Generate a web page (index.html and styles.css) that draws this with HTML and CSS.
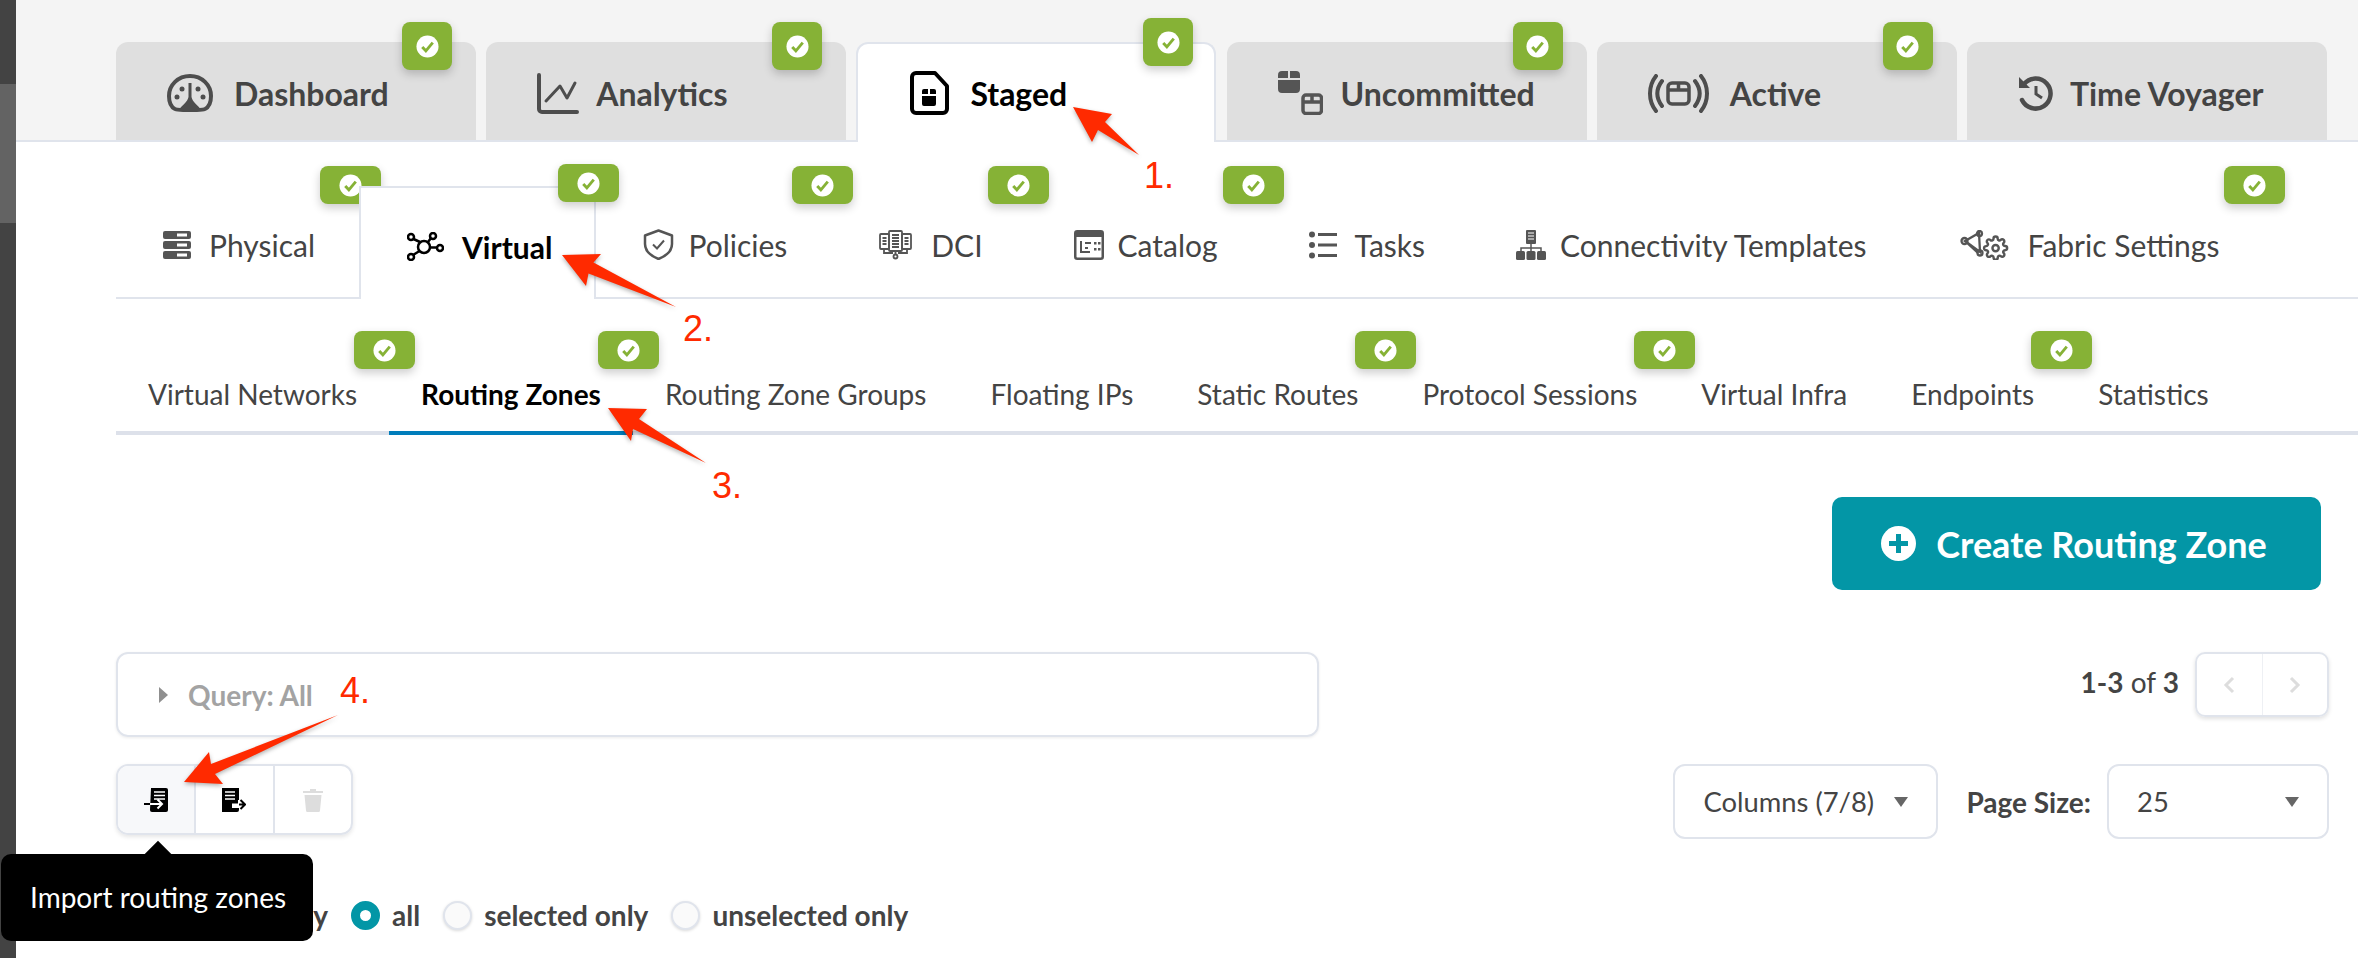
FILE: index.html
```html
<!DOCTYPE html>
<html lang="en">
<head>
    <meta charset="UTF-8">
    <title>Routing Zones</title>
    <link rel="stylesheet" href="styles.css">
</head>
<body>
    <svg class="sprite" aria-hidden="true">
        <symbol id="check" viewBox="0 0 24 24">
            <circle cx="12" cy="12" r="11.5" fill="#fff"/>
            <path d="M6.5 12.5l3.8 4L17.5 8" fill="none" stroke="#86b236" stroke-width="3"/>
        </symbol>
    </svg>

    <div class="side-strip">
        <div class="strip-dark strip-top"></div>
        <div class="strip-light"></div>
        <div class="strip-dark strip-rest"></div>
    </div>

    <div class="page">
        <!-- top level tabs -->
        <div class="main-tabs">
            <div class="main-tab">
                <svg class="ico-dash" viewBox="0 0 46 38"><path d="M23 2C11 2 2 11 2 22c0 6 2 11 6 13 4 1.500 26 1.500 30 0 4-2 6-7 6-13C44 11 35 2 23 2z" fill="none" stroke="#4d4d4d" stroke-width="4"/><path d="M21.500 9h3v14c1 5 6 8 10 13H11.500c4-5 9-8 10-13z" fill="#4d4d4d"/><circle cx="10" cy="23" r="2.500" fill="#4d4d4d"/><circle cx="15" cy="15" r="2.500" fill="#4d4d4d"/><circle cx="31" cy="15" r="2.500" fill="#4d4d4d"/><circle cx="36" cy="23" r="2.500" fill="#4d4d4d"/></svg>
                <span>Dashboard</span>
                <div class="badge"><svg><use href="#check"/></svg></div>
            </div>
            <div class="main-tab">
                <svg class="ico-chart" viewBox="0 0 42 41"><path d="M2 2v34a3 3 0 0 0 3 3h35" fill="none" stroke="#4d4d4d" stroke-width="4" stroke-linecap="round"/><path d="M9 28l14-15 7 12 8-15" fill="none" stroke="#4d4d4d" stroke-width="3" stroke-linecap="round" stroke-linejoin="round"/></svg>
                <span>Analytics</span>
                <div class="badge"><svg><use href="#check"/></svg></div>
            </div>
            <div class="main-tab active">
                <svg class="ico-staged" viewBox="0 0 40 44"><path d="M7 2h19l12 13v23a4 4 0 0 1-4 4H7a4 4 0 0 1-4-4V6a4 4 0 0 1 4-4z" fill="none" stroke="#000" stroke-width="4" stroke-linejoin="round"/><path d="M13 20a2 2 0 0 1 2-2h4v5h-6zM21 18h4a2 2 0 0 1 2 2v3h-6zM13 25h14v8a2 2 0 0 1-2 2H15a2 2 0 0 1-2-2z" fill="#000"/></svg>
                <span>Staged</span>
                <div class="badge"><svg><use href="#check"/></svg></div>
            </div>
            <div class="main-tab">
                <svg class="ico-uncommitted" viewBox="0 0 45 44"><path d="M0 7V4a4 4 0 0 1 4-4h6v7zM12 0h6a4 4 0 0 1 4 4v3H12zM0 9h22v9a4 4 0 0 1-4 4H4a4 4 0 0 1-4-4z" fill="#555"/><rect x="25" y="24" width="18.500" height="18.500" rx="3" fill="none" stroke="#555" stroke-width="3.500"/><path d="M24 31h20M34 23v8" stroke="#555" stroke-width="3.500"/></svg>
                <span>Uncommitted</span>
                <div class="badge"><svg><use href="#check"/></svg></div>
            </div>
            <div class="main-tab">
                <svg class="ico-active" viewBox="0 0 61 39"><g fill="none" stroke="#4d4d4d" stroke-width="4" stroke-linecap="round"><path d="M8 2C0 12 0 27 8 37M14 7C8 15 8 24 14 32M53 2c8 10 8 25 0 35M47 7c6 8 6 17 0 25"/><rect x="20" y="9" width="21" height="21" rx="4" stroke-width="3.500"/><path d="M20 16h21M30.500 9v7" stroke-width="3.500" stroke-linecap="butt"/></g></svg>
                <span>Active</span>
                <div class="badge"><svg><use href="#check"/></svg></div>
            </div>
            <div class="main-tab">
                <svg class="ico-time" viewBox="0 0 35 35"><path d="M6 8A15 15 0 1 1 4 24" fill="none" stroke="#4d4d4d" stroke-width="4.500" stroke-linecap="round"/><path d="M1 1v11h11z" fill="#4d4d4d"/><path d="M18 10v8l6 4" fill="none" stroke="#4d4d4d" stroke-width="3"/></svg>
                <span>Time Voyager</span>
            </div>
        </div>

        <!-- second level -->
        <div class="sub-tabs">
            <div class="sub-tab">
                <svg class="ico-server" viewBox="0 0 28 28"><g fill="#555"><rect width="28" height="8" rx="2"/><rect y="10" width="28" height="8" rx="2"/><rect y="20" width="28" height="8" rx="2"/></g><g fill="#fff"><rect x="14" y="2.500" width="10" height="3"/><rect x="14" y="12.500" width="10" height="3"/><rect x="14" y="22.500" width="10" height="3"/></g></svg>
                <span>Physical</span>
                <div class="badge"><svg><use href="#check"/></svg></div>
            </div>
            <div class="sub-tab active">
                <svg class="ico-virtual" viewBox="0 0 37 29"><g fill="none" stroke="#000" stroke-width="2.500"><circle cx="17" cy="15" r="6"/><circle cx="26" cy="4" r="3"/><circle cx="4" cy="5" r="3"/><circle cx="4" cy="25" r="3"/><circle cx="33" cy="16" r="3"/><path d="M21 10l3-4M13 10L6.500 7M12.500 19L6 23M23 15.500h7"/></g></svg>
                <span>Virtual</span>
                <div class="badge"><svg><use href="#check"/></svg></div>
            </div>
            <div class="sub-tab">
                <svg class="ico-shield" viewBox="0 0 31 31"><path d="M15.500 1.500L29 6.500V15c0 7-6 12-13.500 15C8 27 2 22 2 15V6.500z" fill="none" stroke="#555" stroke-width="2.500" stroke-linejoin="round"/><path d="M10 15.500l4 4 7-8" fill="none" stroke="#555" stroke-width="2"/></svg>
                <span>Policies</span>
                <div class="badge"><svg><use href="#check"/></svg></div>
            </div>
            <div class="sub-tab">
                <svg class="ico-dci" viewBox="0 0 35 30"><g fill="none" stroke="#555" stroke-width="1.800"><rect x="11" y="1" width="13" height="20" rx="1"/><rect x="2" y="4" width="9" height="15" rx="1"/><rect x="24" y="4" width="9" height="15" rx="1"/><path d="M14 5h7M14 8h7M14 11h7M14 14h7M14 17h7M4.500 8h4M4.500 11h4M4.500 14h4M26.500 8h4M26.500 11h4M26.500 14h4M6 19v4h9M29 19v4h-9M17.500 21v4"/><circle cx="17.500" cy="26.500" r="2"/></g></svg>
                <span>DCI</span>
                <div class="badge"><svg><use href="#check"/></svg></div>
            </div>
            <div class="sub-tab">
                <svg class="ico-catalog" viewBox="0 0 30 30"><rect x="1.250" y="1.250" width="27.500" height="27.500" rx="2" fill="none" stroke="#555" stroke-width="2.500"/><rect x="1" y="1" width="28" height="6" fill="#555"/><path d="M7 11v11h9M11 13h6M11 18h3" fill="none" stroke="#555" stroke-width="2"/><g fill="#555"><rect x="20" y="12" width="2.500" height="2.500"/><rect x="24" y="12" width="2.500" height="2.500"/><rect x="20" y="18" width="2.500" height="2.500"/><rect x="24" y="18" width="2.500" height="2.500"/></g></svg>
                <span>Catalog</span>
                <div class="badge"><svg><use href="#check"/></svg></div>
            </div>
            <div class="sub-tab">
                <svg class="ico-tasks" viewBox="0 0 28 28"><g fill="#555"><circle cx="3" cy="3.500" r="3"/><circle cx="3" cy="14" r="3"/><circle cx="3" cy="24.500" r="3"/></g><path d="M9 3.500h19M9 14h19M9 24.500h19" stroke="#555" stroke-width="3"/></svg>
                <span>Tasks</span>
            </div>
            <div class="sub-tab">
                <svg class="ico-conn" viewBox="0 0 30 30"><rect x="10" width="10" height="14" rx="1" fill="#555"/><path d="M12 3h6M12 6h6M12 9h6" stroke="#fff" stroke-width="1.200"/><path d="M15 14v4M5 21v-3h20v3M15 18v3" fill="none" stroke="#555" stroke-width="1.500"/><g fill="#555"><rect y="21" width="9" height="9" rx="1.500"/><rect x="10.500" y="21" width="9" height="9" rx="1.500"/><rect x="21" y="21" width="9" height="9" rx="1.500"/></g></svg>
                <span>Connectivity Templates</span>
            </div>
            <div class="sub-tab fabric">
                <svg class="ico-fabric" viewBox="0 0 50 30"><g fill="none" stroke="#555" stroke-width="2.300"><path d="M5 11L19 3l1 19zM5 11l13 12"/><circle cx="4.500" cy="11" r="3"/><circle cx="19.500" cy="3.500" r="2.500"/><circle cx="20" cy="23" r="2.500"/><g transform="translate(23 5.500) scale(1.050)"><circle cx="12" cy="12" r="3"/><path d="M19.400 15a1.650 1.650 0 0 0 .33 1.820l.06.06a2 2 0 0 1 0 2.830 2 2 0 0 1-2.830 0l-.06-.06a1.650 1.650 0 0 0-1.820-.33 1.650 1.650 0 0 0-1 1.510V21a2 2 0 0 1-2 2 2 2 0 0 1-2-2v-.09A1.650 1.650 0 0 0 9 19.400a1.650 1.650 0 0 0-1.820.33l-.06.06a2 2 0 0 1-2.830 0 2 2 0 0 1 0-2.830l.06-.06a1.650 1.650 0 0 0 .33-1.820 1.650 1.650 0 0 0-1.510-1H3a2 2 0 0 1-2-2 2 2 0 0 1 2-2h.09A1.650 1.650 0 0 0 4.600 9a1.650 1.650 0 0 0-.33-1.820l-.06-.06a2 2 0 0 1 0-2.830 2 2 0 0 1 2.830 0l.06.06a1.650 1.650 0 0 0 1.820.33H9a1.650 1.650 0 0 0 1-1.510V3a2 2 0 0 1 2-2 2 2 0 0 1 2 2v.09a1.650 1.650 0 0 0 1 1.510 1.650 1.650 0 0 0 1.820-.33l.06-.06a2 2 0 0 1 2.830 0 2 2 0 0 1 0 2.830l-.06.06a1.650 1.650 0 0 0-.33 1.820V9a1.650 1.650 0 0 0 1.510 1H21a2 2 0 0 1 2 2 2 2 0 0 1-2 2h-.09a1.650 1.650 0 0 0-1.510 1z"/></g></g></svg>
                <span>Fabric Settings</span>
                <div class="badge"><svg><use href="#check"/></svg></div>
            </div>
        </div>

        <!-- third level -->
        <div class="leaf-tabs">
            <div class="leaf-tab">Virtual Networks<div class="badge"><svg><use href="#check"/></svg></div></div>
            <div class="leaf-tab active">Routing Zones<div class="badge"><svg><use href="#check"/></svg></div></div>
            <div class="leaf-tab">Routing Zone Groups</div>
            <div class="leaf-tab">Floating IPs</div>
            <div class="leaf-tab">Static Routes<div class="badge"><svg><use href="#check"/></svg></div></div>
            <div class="leaf-tab">Protocol Sessions<div class="badge"><svg><use href="#check"/></svg></div></div>
            <div class="leaf-tab">Virtual Infra</div>
            <div class="leaf-tab">Endpoints<div class="badge"><svg><use href="#check"/></svg></div></div>
            <div class="leaf-tab">Statistics</div>
        </div>

        <div class="create-row">
            <button class="create-btn">
                <svg viewBox="0 0 35 35"><circle cx="17.500" cy="17.500" r="17.500" fill="#fff"/><path d="M17.500 8v19M8 17.500h19" stroke="#0396a6" stroke-width="5"/></svg>
                <span>Create Routing Zone</span>
            </button>
        </div>

        <div class="query-row">
            <div class="query-box"><i class="query-caret"></i>Query: All</div>
            <div class="pager">
                <span class="pager-text"><b>1-3</b> of <b>3</b></span>
                <div class="pager-btns">
                    <div class="pager-btn"><svg viewBox="0 0 12 18"><path d="M10 2L3 9l7 7" fill="none" stroke="#ddd" stroke-width="3"/></svg></div>
                    <div class="pager-btn"><svg viewBox="0 0 12 18"><path d="M2 2l7 7-7 7" fill="none" stroke="#ddd" stroke-width="3"/></svg></div>
                </div>
            </div>
        </div>

        <div class="tools-row">
            <div class="btn-group">
                <div class="group-btn hover">
                    <svg viewBox="0 0 24 24"><path d="M7 0h15a2 2 0 0 1 2 2v20a2 2 0 0 1-2 2H8a2 2 0 0 1-2-2z" fill="#000"/><path d="M10 4h11M10 7.500h11M10 11h11" stroke="#fff" stroke-width="1.500"/><path d="M0 16h6" stroke="#000" stroke-width="2"/><path d="M6 16h12M13.500 11.500L18 16l-4.500 4.500" fill="none" stroke="#fff" stroke-width="2"/></svg>
                </div>
                <div class="group-btn">
                    <svg viewBox="0 0 24 24"><path d="M2 0h15v12H9v8h8v2a2 2 0 0 1-2 2H2a2 2 0 0 1-2-2V2a2 2 0 0 1 2-2z" fill="#000"/><path d="M0 0h16v16H10v8H0z" fill="#000"/><path d="M3 4h10M3 7.500h10M3 11h10" stroke="#fff" stroke-width="1.500"/><path d="M10 16.500h7" stroke="#fff" stroke-width="2"/><path d="M17 16.500h6M18.500 12l4.500 4.500-4.500 4.500" fill="none" stroke="#000" stroke-width="2"/></svg>
                </div>
                <div class="group-btn">
                    <svg viewBox="0 0 22 24"><path d="M8 1h6v2h7v2H1V3h7zM2.500 7h17l-1.500 15.500a1.500 1.500 0 0 1-1.500 1.500h-11A1.500 1.500 0 0 1 4 22.500z" fill="#ddd"/></svg>
                </div>
            </div>
            <div class="table-opts">
                <div class="select columns-select">Columns (7/8)<i class="select-caret"></i></div>
                <b class="size-label">Page Size:</b>
                <div class="select size-select">25<i class="select-caret"></i></div>
            </div>
        </div>

        <div class="radio-row">
            <span class="radio-label">by</span>
            <i class="radio checked"></i><span>all</span>
            <i class="radio"></i><span>selected only</span>
            <i class="radio"></i><span>unselected only</span>
        </div>
    </div>

    <div class="tooltip">Import routing zones</div>

    <!-- red annotations on top of the screenshot -->
    <svg class="arrows" viewBox="0 0 2358 958">
        <polygon points="1073,107 1112,114 1105,122 1139,155 1098,130 1092,142"/>
        <polygon points="562,255 601,254 593.500,262.500 676,307 588.500,273.500 586,286"/>
        <polygon points="608,408 647,409 639,419 706,463 633,429 631,441"/>
        <polygon points="184,782 209,752 211,764 338,715 215,774 223,784"/>
    </svg>
    <span class="note note-1">1.</span>
    <span class="note note-2">2.</span>
    <span class="note note-3">3.</span>
    <span class="note note-4">4.</span>
</body>
</html>
```

FILE: styles.css
```css
html, body {
    margin: 0;
    height: 100%;
}

body {
    display: flex;
    height: 958px;
    overflow: hidden;
    background: #fff;
    color: #444;
    font-family: "Lato", "Open Sans", sans-serif;
    position: relative;
}

.sprite {
    position: absolute;
    width: 0;
    height: 0;
}

.side-strip {
    width: 16px;
    flex: none;
    display: flex;
    flex-direction: column;
}

.strip-dark {
    background: #434343;
}

.strip-top {
    height: 84px;
}

.strip-light {
    height: 139px;
    background: #636363;
}

.strip-rest {
    flex: 1;
}

.page {
    flex: 1;
    min-width: 0;
}

/* status badge */
.badge {
    position: absolute;
    display: flex;
    align-items: center;
    justify-content: center;
    background: #86b236;
    border-radius: 8px;
    box-shadow: 0 4px 10px rgba(0, 0, 0, 0.2);
}

.badge svg {
    width: 23px;
    height: 23px;
}

/* top level tabs */
.main-tabs {
    display: flex;
    gap: 10.2px;
    height: 98px;
    padding: 42px 0 0 100px;
    background: #f4f4f4;
    border-bottom: 2px solid #e0e4ec;
}

.main-tab {
    position: relative;
    display: flex;
    align-items: center;
    gap: 21px;
    box-sizing: border-box;
    width: 360px;
    height: 98px;
    padding: 4px 0 0 51px;
    background: #dfdfdf;
    border-radius: 12px 12px 0 0;
    font-size: 32px;
    font-weight: 700;
    color: #444;
}

.main-tab.active {
    height: 100px;
    padding: 0 0 0 51px;
    background: #fff;
    border: 2px solid #e0e4ec;
    border-bottom: none;
    color: #000;
}

.main-tab .badge {
    right: 24px;
    top: -20px;
    width: 50px;
    height: 48px;
}

.main-tab.active .badge {
    right: 21px;
    top: -26px;
}

.ico-dash { width: 46px; height: 38px; }
.ico-chart { width: 42px; height: 41px; margin-right: -4px; }
.ico-staged { width: 40px; height: 44px; }
.ico-uncommitted { width: 45px; height: 44px; margin-right: -3px; }
.ico-active { width: 61px; height: 39px; }
.ico-time { width: 35px; height: 35px; margin-right: -4px; }

/* second level */
.sub-tabs {
    display: flex;
    height: 111px;
    margin-left: 100px;
    padding-top: 44px;
    border-bottom: 2px solid #e0e4ec;
}

.sub-tab {
    position: relative;
    display: flex;
    align-items: center;
    gap: 18px;
    box-sizing: border-box;
    height: 111px;
    padding: 6px 44px 0 47px;
    font-size: 30px;
    color: #444;
}

.sub-tab.active {
    height: 113px;
    padding: 6px 42px 0 46px;
    background: #fff;
    border: 2px solid #e0e4ec;
    border-bottom: none;
    font-weight: 700;
    color: #000;
}

.sub-tab.fabric {
    padding-left: 49px;
}

.sub-tab .badge {
    right: -22px;
    top: -20px;
    width: 61px;
    height: 38px;
}

.sub-tab.active .badge {
    right: -25px;
    top: -24px;
}

.ico-server { width: 28px; height: 28px; }
.ico-virtual { width: 37px; height: 29px; }
.ico-shield { width: 31px; height: 31px; margin-right: -4px; }
.ico-dci { width: 35px; height: 30px; }
.ico-catalog { width: 30px; height: 30px; margin-right: -4px; }
.ico-tasks { width: 28px; height: 28px; }
.ico-conn { width: 30px; height: 30px; margin-right: -4px; }
.ico-fabric { width: 50px; height: 30px; }

/* third level */
.leaf-tabs {
    display: flex;
    height: 68px;
    margin: 64px 0 0 100px;
    border-bottom: 4px solid #dde1ea;
}

.leaf-tab {
    position: relative;
    box-sizing: border-box;
    height: 72px;
    padding: 14px 32px 0;
    font-size: 28px;
    line-height: 34px;
    color: #444;
}

.leaf-tab.active {
    border-bottom: 4px solid #007dbb;
    font-weight: 700;
    color: #000;
}

.leaf-tab .badge {
    right: -26px;
    top: -32px;
    width: 61px;
    height: 38px;
}

/* create button */
.create-row {
    display: flex;
    justify-content: flex-end;
    padding: 62px 37px 0 0;
}

.create-btn {
    display: flex;
    align-items: center;
    justify-content: center;
    gap: 20px;
    width: 489px;
    height: 93px;
    padding: 0 5px 0 0;
    border: none;
    border-radius: 10px;
    background: #0396a6;
    color: #fff;
    font: 700 36px "Lato", sans-serif;
}

.create-btn svg {
    width: 35px;
    height: 35px;
}

/* query row */
.query-row {
    display: flex;
    justify-content: space-between;
    margin: 62px 29px 0 100px;
}

.query-box {
    display: flex;
    align-items: center;
    box-sizing: border-box;
    width: 1203px;
    height: 85px;
    padding-left: 41px;
    border: 2px solid #e0e4ec;
    border-radius: 12px;
    box-shadow: 0 1px 3px rgba(0, 0, 0, 0.08);
    font-size: 28px;
    font-weight: 700;
    color: #a3a3a3;
}

.query-caret {
    width: 0;
    height: 0;
    margin-right: 20px;
    border-left: 9px solid #8f8f8f;
    border-top: 8px solid transparent;
    border-bottom: 8px solid transparent;
}

.pager {
    display: flex;
    gap: 16px;
}

.pager-text {
    padding-top: 12px;
    font-size: 28px;
    line-height: 36px;
}

.pager-btns {
    display: flex;
    box-sizing: border-box;
    width: 134px;
    height: 65px;
    border: 2px solid #e0e4ec;
    border-radius: 10px;
    box-shadow: 0 2px 4px rgba(0, 0, 0, 0.12);
}

.pager-btn {
    flex: 1;
    display: flex;
    align-items: center;
    justify-content: center;
}

.pager-btn + .pager-btn {
    border-left: 1px solid #eef0f4;
}

.pager-btn svg {
    width: 12px;
    height: 18px;
}

/* toolbar row */
.tools-row {
    display: flex;
    justify-content: space-between;
    margin: 27px 29px 0 100px;
}

.btn-group {
    display: flex;
    box-sizing: border-box;
    width: 237px;
    height: 71px;
    border: 2px solid #e0e4ec;
    border-radius: 12px;
    box-shadow: 0 2px 4px rgba(0, 0, 0, 0.1);
    overflow: hidden;
}

.group-btn {
    flex: 1;
    display: flex;
    align-items: center;
    justify-content: center;
}

.group-btn + .group-btn {
    border-left: 2px solid #e0e4ec;
}

.group-btn.hover {
    background: #f7f8fa;
}

.group-btn svg {
    width: 24px;
    height: 24px;
}

.table-opts {
    display: flex;
    align-items: center;
}

.select {
    position: relative;
    display: flex;
    align-items: center;
    justify-content: space-between;
    box-sizing: border-box;
    height: 75px;
    padding: 0 28px;
    border: 2px solid #e0e4ec;
    border-radius: 12px;
    font-size: 27.4px;
}

.columns-select {
    width: 265px;
}

.size-select {
    width: 222px;
}

.size-label {
    margin: 0 16px 0 28px;
    font-size: 28px;
}

.select-caret {
    width: 0;
    height: 0;
    border-top: 10px solid #666;
    border-left: 7px solid transparent;
    border-right: 7px solid transparent;
}

/* radio row */
.radio-row {
    display: flex;
    align-items: center;
    height: 34px;
    margin: 59px 0 0 0;
    font-size: 28px;
    font-weight: 700;
    color: #444;
}

.radio-label {
    width: 312px;
    text-align: right;
    white-space: nowrap;
}

.radio {
    box-sizing: border-box;
    width: 29px;
    height: 29px;
    margin: 0 12px 0 23px;
    border: 2px solid #e0e4ec;
    border-radius: 50%;
    background: #fafafa;
    box-shadow: 0 1px 3px rgba(0, 0, 0, 0.15);
}

.radio.checked {
    border: 9px solid #0396a6;
    background: #fff;
    box-shadow: none;
}

/* tooltip */
.tooltip {
    position: absolute;
    left: 1px;
    top: 854px;
    width: 312px;
    height: 87px;
    box-sizing: border-box;
    padding-left: 29px;
    border-radius: 10px;
    background: #000;
    color: #fff;
    font-size: 28px;
    line-height: 87px;
}

.tooltip::before {
    content: "";
    position: absolute;
    left: 144px;
    top: -13px;
    width: 26px;
    height: 26px;
    background: #000;
    transform: rotate(45deg) scale(0.72);
}

/* annotations */
.arrows {
    position: absolute;
    left: 0;
    top: 0;
    width: 2358px;
    height: 958px;
    fill: #ff2a00;
    filter: drop-shadow(0 2px 2px rgba(0, 0, 0, 0.3));
    pointer-events: none;
}

.note {
    position: absolute;
    color: #ff2a00;
    font-family: "Liberation Sans", sans-serif;
    font-size: 36px;
    line-height: 40px;
}

.note-1 { left: 1144px; top: 156px; }
.note-2 { left: 683px; top: 309px; }
.note-3 { left: 712px; top: 466px; }
.note-4 { left: 340px; top: 671px; }
```
